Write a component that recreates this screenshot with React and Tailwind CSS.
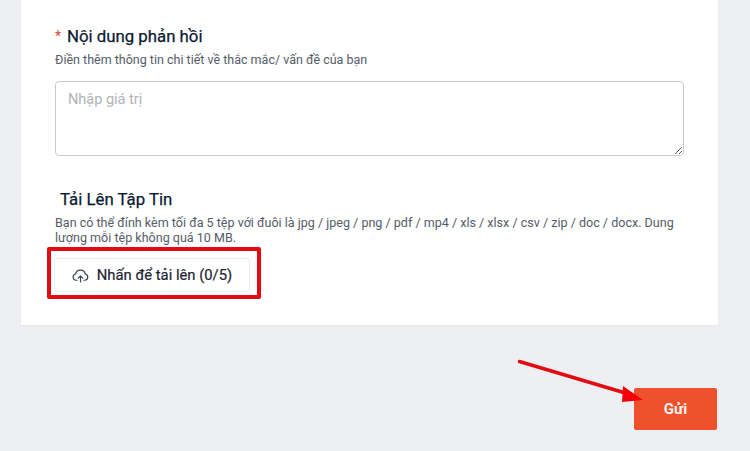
export default function App() {
  return (
    <div className="relative h-[451px] w-[750px] overflow-hidden bg-[#eeeff3] font-['Roboto',sans-serif]">
      <div className="ml-[21px] h-[325px] w-[697px] bg-white pl-[34px] pt-[26px] shadow-[0_1px_2px_rgba(0,0,0,0.04)]">
        <div className="flex h-[20px] items-center text-[16.8px] font-normal leading-[20px] text-[#0b1a33] [-webkit-text-stroke:0.25px_#0b1a33]">
          <span className="mr-[5px] w-[7px] text-[14px] font-normal text-[#e0483f] [-webkit-text-stroke:0]">*</span>
          <span>Nội dung phản hồi</span>
        </div>
        <p className="mt-[5px] text-[12.5px] leading-[18px] text-[#555c68]">
          Điền thêm thông tin chi tiết về thắc mắc/ vấn đề của bạn
        </p>
        <textarea
          readOnly
          placeholder="Nhập giá trị"
          className="mt-[12px] block h-[75px] w-[629px] rounded-[4px] border border-[#c8c9cc] bg-white px-[12px] py-[8px] text-[14.5px] leading-[20px] outline-none placeholder:text-[#b0b3b8]"
        />
        <h3 className="mt-[33px] pl-[5px] text-[16.8px] font-normal leading-[20px] text-[#0b1a33] [-webkit-text-stroke:0.25px_#0b1a33]">Tải Lên Tập Tin</h3>
        <p className="mt-[6px] w-[629px] text-[12.55px] leading-[15px] text-[#555c68]">
          Bạn có thể đính kèm tối đa 5 tệp với đuôi là jpg / jpeg / png / pdf / mp4 / xls / xlsx / csv / zip / doc / docx. Dung lượng mỗi tệp không quá 10 MB.
        </p>
        <button className="-ml-px mt-[13px] flex h-[34px] w-[196px] items-center justify-center gap-[8px] rounded-[3px] border border-[#e8e9ec] bg-white text-[14.8px] font-normal text-[#1d2433] [-webkit-text-stroke:0.2px_#1d2433]">
          <svg width="17" height="15" viewBox="0 0 16 14" fill="none" stroke="#3c4250" strokeWidth="1.1" strokeLinecap="round" strokeLinejoin="round">
            <path d="M4.8 11.5H4A3 3 0 0 1 3.3 5.6 4.8 4.8 0 0 1 12.6 5.6 3 3 0 0 1 12 11.5H11.2" />
            <path d="M8 13V7.5M5.9 9.5 8 7.4 10.1 9.5" />
          </svg>
          <span>Nhấn để tải lên (0/5)</span>
        </button>
      </div>
      <div className="mr-[33px] mt-[63px] flex justify-end">
        <button className="h-[42px] w-[83px] rounded-[2px] bg-[#f0512d] text-[15px] font-bold text-[#fff3ee]">Gửi</button>
      </div>
      <div className="pointer-events-none absolute left-[47px] top-[247px] h-[52px] w-[214px] rounded-[2px] border-[4px] border-[#e30b13]" />
      <svg className="pointer-events-none absolute left-[510px] top-[355px]" width="140" height="55" viewBox="0 0 140 55" fill="none">
        <path d="M9.5 6.5 122 40" stroke="#e30b13" strokeWidth="3.5" strokeLinecap="round" />
        <path d="M113 31 133 45 112 47Z" fill="#f5000a" />
      </svg>
    </div>
  );
}
